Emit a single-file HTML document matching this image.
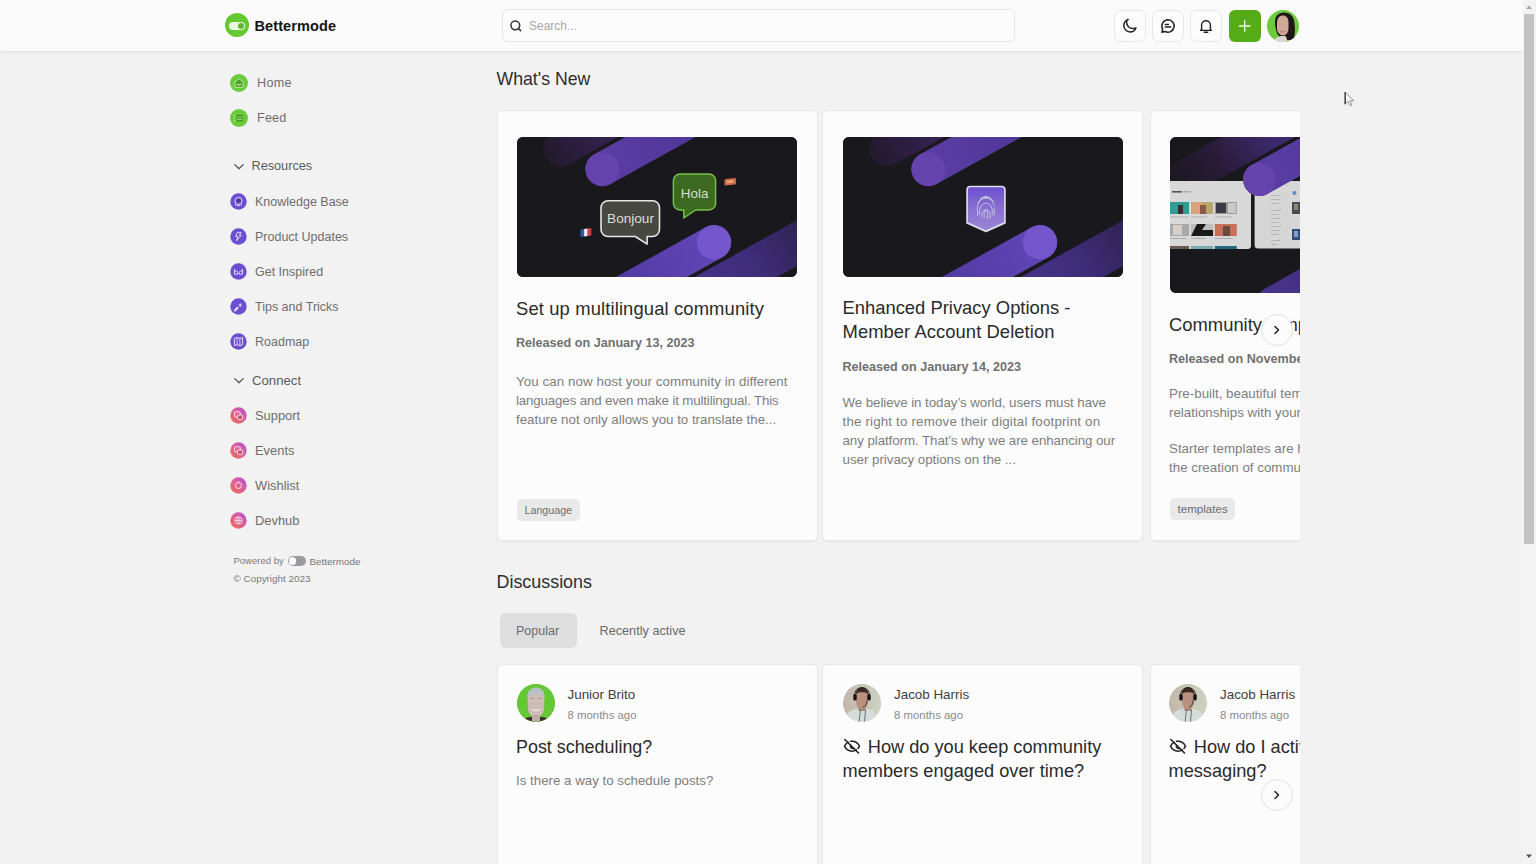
<!DOCTYPE html>
<html><head><meta charset="utf-8">
<style>
*{box-sizing:border-box;margin:0;padding:0}
html,body{width:1536px;height:864px;overflow:hidden}
body{background:#f2f2f2;font-family:"Liberation Sans",sans-serif;position:relative;color:#222}
.abs{position:absolute}
#hdr{position:absolute;left:0;top:0;width:1523px;height:51px;background:#fafafa;box-shadow:0 1px 3px rgba(0,0,0,.08)}
.t{position:absolute;white-space:nowrap;line-height:1}
.btn{position:absolute;top:10px;width:32px;height:32px;border:1px solid #e6e6e6;border-radius:7px;background:#fcfcfc}
.side .ic{position:absolute;width:16px;height:16px;border-radius:50%;left:230px}
.side .lbx{position:absolute;left:256px;font-size:12.5px;color:#6b6b6b;white-space:nowrap;line-height:1}
.card{position:absolute;background:#fcfcfc;border-radius:5px;border:1px solid #e9e9e9;box-shadow:0 1px 2px rgba(0,0,0,.05)}
.img{position:absolute;border-radius:6px;overflow:hidden;background:#19181d}
.ttl{position:absolute;font-size:18.4px;color:#2a2a2a;white-space:nowrap;line-height:24px}
.rel{position:absolute;font-size:12.6px;font-weight:bold;color:#707070;white-space:nowrap;line-height:1}
.body{position:absolute;font-size:13.35px;color:#7e7e7e;white-space:nowrap;line-height:19px}
.tag{position:absolute;height:22px;border-radius:5px;background:#e9e9e9;font-size:11px;color:#6d6d6d;line-height:22px;padding:0 7.5px}
#sb{position:absolute;left:1523px;top:0;width:13px;height:864px;background:#f3f3f3}
</style></head>
<body>
<div id="hdr"></div>
<!-- logo -->
<div class="abs" style="left:225px;top:13px;width:24px;height:24px;border-radius:50%;background:#66c831"></div>
<div class="abs" style="left:229px;top:21.5px;width:16px;height:8px;border-radius:4px;background:#e9f6e1"></div>
<div class="abs" style="left:237.5px;top:22.5px;width:6.5px;height:6.5px;border-radius:50%;background:#5cb82c"></div>
<div class="t" style="left:254.5px;top:18.5px;font-size:14.5px;font-weight:bold;color:#141414;letter-spacing:0.1px">Bettermode</div>
<!-- search -->
<div class="abs" style="left:502px;top:9px;width:513px;height:33px;border:1px solid #e4e4e4;border-radius:6px;background:#fcfcfc"></div>
<svg class="abs" style="left:509px;top:19px" width="14" height="14" viewBox="0 0 14 14"><circle cx="6.3" cy="6.3" r="4.4" fill="none" stroke="#333" stroke-width="1.5"/><path d="M9.4 9.4L11.6 11.6" stroke="#333" stroke-width="1.5" stroke-linecap="round"/></svg>
<div class="t" style="left:529px;top:20px;font-size:12px;color:#a9a9a9">Search...</div>
<!-- buttons -->
<div class="btn" style="left:1114px"></div>
<div class="btn" style="left:1152px"></div>
<div class="btn" style="left:1190px"></div>
<div class="abs" style="left:1229px;top:10px;width:32px;height:32px;border-radius:6px;background:#56ac16"></div>
<svg class="abs" style="left:1237px;top:17.5px" width="16" height="16" viewBox="0 0 16 16"><path d="M7.7 2.7V13.3M2.4 8H13" stroke="#eef8e8" stroke-width="1.35" stroke-linecap="round"/></svg>
<svg class="abs" style="left:1121px;top:17px" width="18" height="18" viewBox="0 0 18 18"><path d="M7.2 2.6C4.6 3.4 2.8 5.8 2.8 8.6c0 3.5 2.8 6.3 6.3 6.3 2.6 0 4.9-1.6 5.8-4-1 .4-2 .6-3 .6-3.5 0-6.3-2.8-6.3-6.3 0-.9.2-1.8.6-2.6z" fill="none" stroke="#222" stroke-width="1.5" stroke-linejoin="round"/></svg>
<svg class="abs" style="left:1159px;top:17px" width="18" height="18" viewBox="0 0 18 18"><path d="M9 2.8a6.2 6.2 0 1 1-2.9 11.7L2.9 15.2l.8-3.1A6.2 6.2 0 0 1 9 2.8z" fill="none" stroke="#222" stroke-width="1.5" stroke-linejoin="round"/><path d="M6.3 7.6h3M6.3 10h5.4" stroke="#222" stroke-width="1.5" stroke-linecap="round"/></svg>
<svg class="abs" style="left:1197px;top:17px" width="18" height="18" viewBox="0 0 18 18"><path d="M4.6 12.2V8.1a4.4 4.4 0 0 1 8.8 0v4.1l1 1.2H3.6z" fill="none" stroke="#222" stroke-width="1.4" stroke-linejoin="round"/><path d="M7.3 15.3h3.4" stroke="#222" stroke-width="1.5" stroke-linecap="round"/></svg>
<!-- avatar -->
<svg class="abs" style="left:1267px;top:10px" width="32" height="32" viewBox="0 0 32 32"><defs><clipPath id="cw"><circle cx="16" cy="16" r="16"/></clipPath></defs><g clip-path="url(#cw)">
<rect width="32" height="32" fill="#6ccb3a"/>
<path d="M8 12c0-6 3.5-9.5 9-9.5 6 0 10 4 10.5 10.5.5 6 1 11-1 17H15c-3-3-7-8-7-18z" fill="#1e1715"/>
<path d="M10 13c0-5 2.5-7.5 6-7.5 3 0 5.5 2.5 5.5 7v6c0 4-2.5 7-5.5 7s-6-3-6-7z" fill="#cfa898"/>
<path d="M7 32c.5-3 3-5.5 7-6h4c1 .5 2 1.5 2 6z" fill="#d9d5d2"/>
<path d="M13 21.5q2.5 1.2 5 0" stroke="#c07070" stroke-width="1" fill="none"/>
</g></svg>
</div>

<div id="sb"></div>
<div class="abs" style="left:1524px;top:14px;width:10px;height:530px;background:#c3c3c3"></div>
<svg class="abs" style="left:1525px;top:4px" width="8" height="6" viewBox="0 0 8 6"><path d="M1 5L4 1.5 7 5z" fill="#a3a3a3"/></svg>
<svg class="abs" style="left:1525px;top:853px" width="8" height="6" viewBox="0 0 8 6"><path d="M1 1.5L4 5 7 1.5z" fill="#505050"/></svg>
<svg class="abs" style="left:1344px;top:91px" width="12" height="17" viewBox="0 0 12 17"><path d="M1 1v12l3-2.6 2 4.4 1.8-.8-1.9-4.2h4z" fill="#f8f8f8" stroke="#8a8a8a" stroke-width=".9" stroke-linejoin="round"/><path d="M1.2 1v12.2" stroke="#3a3a3a" stroke-width="1.3"/></svg>

<div class="side">
<svg class="abs" style="left:230px;top:74px" width="18" height="18" viewBox="0 0 18 18"><circle cx="9" cy="9" r="9" fill="#6acb3d"/><path d="M5 8l4-3.3L13 8v5.3H5z" fill="#4c9f24" stroke="#c9ebb5" stroke-width=".9" stroke-linejoin="round"/><path d="M6.8 10.2q2.2 1.6 4.4 0" fill="none" stroke="#dff4d2" stroke-width="1"/></svg>
<div class="t" style="left:257px;top:76.5px;font-size:12.6px;letter-spacing:.3px;color:#6d6d6d">Home</div>
<svg class="abs" style="left:230px;top:109px" width="18" height="18" viewBox="0 0 18 18"><circle cx="9" cy="9" r="9" fill="#6acb3d"/><rect x="6.3" y="5.8" width="7" height="6.8" rx="1" fill="#48a020"/><path d="M7 8.3h5.6M7 10.5h5.6" stroke="#a8df88" stroke-width=".8"/><circle cx="4.4" cy="6.5" r=".6" fill="#dff4d2"/><circle cx="4.4" cy="9" r=".6" fill="#dff4d2"/><circle cx="4.4" cy="11.5" r=".6" fill="#dff4d2"/></svg>
<div class="t" style="left:257px;top:111.5px;font-size:12.6px;letter-spacing:.2px;color:#6d6d6d">Feed</div>
<svg class="abs" style="left:232.5px;top:162px" width="12" height="10" viewBox="0 0 12 10"><path d="M1.8 2.6L6 6.8l4.2-4.2" fill="none" stroke="#555" stroke-width="1.3" stroke-linecap="round" stroke-linejoin="round"/></svg>
<div class="t" style="left:251.5px;top:160px;font-size:12.7px;color:#5b5b5b">Resources</div>
<svg class="abs" style="left:230px;top:192.5px" width="17" height="17" viewBox="0 0 17 17"><circle cx="8.5" cy="8.5" r="8.2" fill="#6a4fd0"/><circle cx="8.5" cy="8" r="3.6" fill="none" stroke="#e9d6f2" stroke-width="1"/><ellipse cx="8.5" cy="7.6" rx="2.2" ry="1.6" fill="#4a2fa0"/><path d="M6.2 11.2l-.8 1.6M10.8 11.2l.8 1.6M7 12.6h3" stroke="#e9d6f2" stroke-width=".9" fill="none"/></svg>
<div class="t" style="left:255px;top:195.5px;font-size:12.5px;color:#6d6d6d">Knowledge Base</div>
<svg class="abs" style="left:230px;top:227.5px" width="17" height="17" viewBox="0 0 17 17"><circle cx="8.5" cy="8.5" r="8.2" fill="#6a4fd0"/><path d="M9.6 4.4H7.2L5.8 8.6h2.1l-1.4 4.2 4.8-5.6H9.2l1.8-2.8z" fill="none" stroke="#e9d6f2" stroke-width="1" stroke-linejoin="round"/></svg>
<div class="t" style="left:255px;top:230.5px;font-size:12.5px;color:#6d6d6d">Product Updates</div>
<svg class="abs" style="left:230px;top:262.5px" width="17" height="17" viewBox="0 0 17 17"><circle cx="8.5" cy="8.5" r="8.2" fill="#6a4fd0"/><path d="M4.5 6v5.2h3.3V9.6c0-1-.8-1.6-1.6-1.6H4.5M12.5 6v5.2H9.2V9.6c0-1 .8-1.6 1.6-1.6h1.7" fill="none" stroke="#e9d6f2" stroke-width="1" stroke-linejoin="round"/></svg>
<div class="t" style="left:255px;top:265.5px;font-size:12.5px;color:#6d6d6d">Get Inspired</div>
<svg class="abs" style="left:230px;top:297.5px" width="17" height="17" viewBox="0 0 17 17"><circle cx="8.5" cy="8.5" r="8.2" fill="#6a4fd0"/><path d="M5 12.4l2.6-2.6" stroke="#e9d6f2" stroke-width="2.2" stroke-linecap="round"/><path d="M10.2 4.8l.7 1.6 1.6.7-1.6.7-.7 1.6-.7-1.6-1.6-.7 1.6-.7z" fill="#e9d6f2"/></svg>
<div class="t" style="left:255px;top:300.5px;font-size:12.5px;color:#6d6d6d">Tips and Tricks</div>
<svg class="abs" style="left:230px;top:332.5px" width="17" height="17" viewBox="0 0 17 17"><circle cx="8.5" cy="8.5" r="8.2" fill="#6a4fd0"/><path d="M4.4 5.4l2.7-.9 2.8.9 2.7-.9v7.2l-2.7.9-2.8-.9-2.7.9z" fill="none" stroke="#e9d6f2" stroke-width="1" stroke-linejoin="round"/><path d="M7.1 4.5v7.2M9.9 5.4v7.2" stroke="#e9d6f2" stroke-width=".9"/></svg>
<div class="t" style="left:255px;top:335.5px;font-size:12.5px;color:#6d6d6d">Roadmap</div>
<svg class="abs" style="left:232.5px;top:376px" width="12" height="10" viewBox="0 0 12 10"><path d="M1.8 2.6L6 6.8l4.2-4.2" fill="none" stroke="#555" stroke-width="1.3" stroke-linecap="round" stroke-linejoin="round"/></svg>
<div class="t" style="left:252px;top:373.5px;font-size:13.2px;color:#5b5b5b">Connect</div>
<svg class="abs" style="left:230px;top:406.5px" width="17" height="17" viewBox="0 0 17 17"><defs><linearGradient id="pg0" x1="1" y1="0" x2="0" y2="1"><stop offset="0" stop-color="#a94fd6"/><stop offset=".45" stop-color="#df5f9e"/><stop offset="1" stop-color="#e8704a"/></linearGradient></defs><circle cx="8.5" cy="8.5" r="8.2" fill="url(#pg0)"/><rect x="4.6" y="4.8" width="5.6" height="5" rx=".8" fill="none" stroke="#f6e0ea" stroke-width="1"/><rect x="7.6" y="8" width="5" height="4.4" rx=".8" fill="#c8506a" stroke="#f6e0ea" stroke-width="1"/></svg>
<div class="t" style="left:255px;top:409.5px;font-size:12.9px;color:#6d6d6d">Support</div>
<svg class="abs" style="left:230px;top:441.5px" width="17" height="17" viewBox="0 0 17 17"><defs><linearGradient id="pg1" x1="1" y1="0" x2="0" y2="1"><stop offset="0" stop-color="#a94fd6"/><stop offset=".45" stop-color="#df5f9e"/><stop offset="1" stop-color="#e8704a"/></linearGradient></defs><circle cx="8.5" cy="8.5" r="8.2" fill="url(#pg1)"/><rect x="4.6" y="4.8" width="5.6" height="5" rx=".8" fill="none" stroke="#f6e0ea" stroke-width="1"/><rect x="7.6" y="8" width="5" height="4.4" rx=".8" fill="#c8506a" stroke="#f6e0ea" stroke-width="1"/></svg>
<div class="t" style="left:255px;top:444.5px;font-size:12.9px;color:#6d6d6d">Events</div>
<svg class="abs" style="left:230px;top:476.5px" width="17" height="17" viewBox="0 0 17 17"><defs><linearGradient id="pg2" x1="1" y1="0" x2="0" y2="1"><stop offset="0" stop-color="#a94fd6"/><stop offset=".45" stop-color="#df5f9e"/><stop offset="1" stop-color="#e8704a"/></linearGradient></defs><circle cx="8.5" cy="8.5" r="8.2" fill="url(#pg2)"/><circle cx="8.5" cy="8.5" r="3" fill="none" stroke="#f6e0ea" stroke-width="1"/><path d="M8.5 4.3v1.4" stroke="#f6e0ea" stroke-width="1"/></svg>
<div class="t" style="left:255px;top:479.5px;font-size:12.9px;color:#6d6d6d">Wishlist</div>
<svg class="abs" style="left:230px;top:511.5px" width="17" height="17" viewBox="0 0 17 17"><defs><linearGradient id="pg3" x1="1" y1="0" x2="0" y2="1"><stop offset="0" stop-color="#a94fd6"/><stop offset=".45" stop-color="#df5f9e"/><stop offset="1" stop-color="#e8704a"/></linearGradient></defs><circle cx="8.5" cy="8.5" r="8.2" fill="url(#pg3)"/><circle cx="8.5" cy="8.5" r="3.6" fill="none" stroke="#f6e0ea" stroke-width=".9"/><path d="M4.9 8.5h7.2M8.5 4.9c-1.2 1.2-1.2 6 0 7.2M8.5 4.9c1.2 1.2 1.2 6 0 7.2" fill="none" stroke="#f6e0ea" stroke-width=".8"/></svg>
<div class="t" style="left:255px;top:514.5px;font-size:12.9px;color:#6d6d6d">Devhub</div>
<div class="t" style="left:233.5px;top:556px;font-size:9.5px;color:#7a7a7a">Powered by</div>
<div class="abs" style="left:287.5px;top:556px;width:18px;height:9.5px;border-radius:5px;background:#9a9ca2"></div><div class="abs" style="left:288.5px;top:557px;width:7.5px;height:7.5px;border-radius:50%;background:#fff"></div>
<div class="t" style="left:309.5px;top:556.5px;font-size:9.9px;color:#777">Bettermode</div>
<div class="t" style="left:233.5px;top:573.5px;font-size:9.9px;color:#7a7a7a">&copy; Copyright 2023</div>
</div>

<div class="t" style="left:496.5px;top:71px;font-size:17.7px;color:#2e2e2e">What's New</div>
<div class="card" style="left:497px;top:110px;width:320.5px;height:431px"></div>
<div class="card" style="left:822px;top:110px;width:320.5px;height:431px"></div>
<div style="position:absolute;left:1150px;top:110px;width:150px;height:434px;overflow:hidden"><div class="card" style="left:0;top:0;width:320px;height:431px"></div></div>
<div class="img" style="left:517px;top:137px;width:280px;height:140px" id="im1"><svg width="280" height="140" viewBox="0 0 280 140" style="display:block">
<defs>
<linearGradient id="agA" x1="0" y1="0" x2="1" y2="0"><stop offset="0" stop-color="#5c3ea6"/><stop offset=".3" stop-color="#553a9e"/><stop offset=".65" stop-color="#4a3392"/><stop offset="1" stop-color="#3b2a7a"/></linearGradient>
<linearGradient id="agB" x1="0" y1="0" x2="1" y2="0"><stop offset="0" stop-color="#221a2c"/><stop offset=".1" stop-color="#2a1c3c"/><stop offset=".25" stop-color="#34224f"/><stop offset=".4" stop-color="#3a2a6c"/><stop offset=".7" stop-color="#432f80"/><stop offset="1" stop-color="#3a2a70"/></linearGradient>
<linearGradient id="agC" x1="1" y1="0" x2="0" y2="0"><stop offset="0" stop-color="#6448bb"/><stop offset=".25" stop-color="#5a40ad"/><stop offset=".6" stop-color="#4e379e"/><stop offset="1" stop-color="#3d2b82"/></linearGradient>
<linearGradient id="agD" x1="0" y1="0" x2="1" y2="0"><stop offset="0" stop-color="#4a3592"/><stop offset=".45" stop-color="#3d2c76"/><stop offset=".8" stop-color="#2d1f4a"/><stop offset="1" stop-color="#1c1a22" stop-opacity="0"/></linearGradient>
</defs>
<rect width="300" height="160" fill="#19181d"/>
<g transform="translate(85.4,32.2) rotate(-29)">
 <rect x="-44" y="-55.5" width="260" height="35" rx="17.5" fill="url(#agB)"/>
 <rect x="-17" y="-17" width="240" height="34" rx="17" fill="url(#agA)"/>
<circle cx="0" cy="0" r="17" fill="#6543ad"/>
</g>
<g transform="translate(197,105.3) rotate(-29)">
 <rect x="-230" y="-17.2" width="247" height="34.4" rx="17.2" fill="url(#agC)"/>
 <circle cx="0" cy="0" r="17.2" fill="#7356cc"/>
 <rect x="-60" y="21" width="200" height="40" rx="20" fill="url(#agD)"/>
</g>

<path d="M91 63.7h44.5a7 7 0 0 1 7 7v21.8a7 7 0 0 1-7 7h-5.4v7.6l-11.8-7.6H91a7 7 0 0 1-7-7V70.7a7 7 0 0 1 7-7z" fill="#484843" stroke="#e6e6e6" stroke-width="1.6" stroke-linejoin="round"/>
<text x="113.5" y="86.2" font-family="Liberation Sans" font-size="13.6" fill="#dcdcdc" text-anchor="middle">Bonjour</text>
<path d="M163 37.1h29a6.6 6.6 0 0 1 6.6 6.6v22.7a6.6 6.6 0 0 1-6.6 6.6h-13.4l-11.8 8v-8H163a6.6 6.6 0 0 1-6.6-6.6V43.7a6.6 6.6 0 0 1 6.6-6.6z" fill="#3b6a20" stroke="#78c044" stroke-width="1.5" stroke-linejoin="round"/>
<text x="177.6" y="60.7" font-family="Liberation Sans" font-size="13.4" fill="#d6dccf" text-anchor="middle">Hola</text>
<g transform="translate(63.5,91.5) skewY(-8)"><rect x="0" y="1" width="3.6" height="7.5" fill="#2a5aa8"/><rect x="3.6" y="1" width="3.6" height="7.5" fill="#eee"/><rect x="7.2" y="1" width="3.6" height="7.5" fill="#d0404a"/></g>
<g transform="translate(207.5,41.5) skewY(-6)"><rect x="0" y="0.5" width="11.5" height="6.5" rx="1" fill="#c8664a"/><rect x="2" y="2.3" width="7" height="3" fill="#e8a070"/></g>
</svg></div>
<div class="img" style="left:843px;top:137px;width:280px;height:140px" id="im2"><svg width="280" height="140" viewBox="0 0 280 140" style="display:block">
<defs>
<linearGradient id="bgA" x1="0" y1="0" x2="1" y2="0"><stop offset="0" stop-color="#5c3ea6"/><stop offset=".3" stop-color="#553a9e"/><stop offset=".65" stop-color="#4a3392"/><stop offset="1" stop-color="#3b2a7a"/></linearGradient>
<linearGradient id="bgB" x1="0" y1="0" x2="1" y2="0"><stop offset="0" stop-color="#221a2c"/><stop offset=".1" stop-color="#2a1c3c"/><stop offset=".25" stop-color="#34224f"/><stop offset=".4" stop-color="#3a2a6c"/><stop offset=".7" stop-color="#432f80"/><stop offset="1" stop-color="#3a2a70"/></linearGradient>
<linearGradient id="bgC" x1="1" y1="0" x2="0" y2="0"><stop offset="0" stop-color="#6448bb"/><stop offset=".25" stop-color="#5a40ad"/><stop offset=".6" stop-color="#4e379e"/><stop offset="1" stop-color="#3d2b82"/></linearGradient>
<linearGradient id="bgD" x1="0" y1="0" x2="1" y2="0"><stop offset="0" stop-color="#4a3592"/><stop offset=".45" stop-color="#3d2c76"/><stop offset=".8" stop-color="#2d1f4a"/><stop offset="1" stop-color="#1c1a22" stop-opacity="0"/></linearGradient>
</defs>
<rect width="300" height="160" fill="#19181d"/>
<g transform="translate(85.4,32.2) rotate(-29)">
 <rect x="-44" y="-55.5" width="260" height="35" rx="17.5" fill="url(#bgB)"/>
 <rect x="-17" y="-17" width="240" height="34" rx="17" fill="url(#bgA)"/>
<circle cx="0" cy="0" r="17" fill="#6543ad"/>
</g>
<g transform="translate(197,105.3) rotate(-29)">
 <rect x="-230" y="-17.2" width="247" height="34.4" rx="17.2" fill="url(#bgC)"/>
 <circle cx="0" cy="0" r="17.2" fill="#7356cc"/>
 <rect x="-60" y="21" width="200" height="40" rx="20" fill="url(#bgD)"/>
</g>

<defs><linearGradient id="shg" x1="0" y1="0" x2="0" y2="1"><stop offset="0" stop-color="#6a4ed0"/><stop offset=".5" stop-color="#8a70d0"/><stop offset="1" stop-color="#9d86d6"/></linearGradient></defs>
<path d="M127.3 49.5h31.4a3.2 3.2 0 0 1 3.2 3.2v33.2l-18.9 8.5-18.9-8.5V52.7a3.2 3.2 0 0 1 3.2-3.2z" fill="url(#shg)" stroke="#dcdcea" stroke-width="1.7" stroke-linejoin="round"/>
<g fill="none" stroke="#cfd6e8" stroke-width=".8" stroke-linecap="round">
<path d="M134.6 75a8.4 10.6 0 0 1 16.6-6.5"/><path d="M136.8 77.5a6.3 8.3 0 0 1 12.4-5.5v6"/><path d="M139 79.5a4.1 6 0 0 1 8-2.5v4.5"/><path d="M141.2 80.5v-4.5a1.6 2.5 0 0 1 3.2 0v5.5"/><path d="M135 66a9 10 0 0 1 15.5-1.5"/><path d="M137.5 61.5a8 8 0 0 1 10.5 0"/><path d="M142.8 59v2.5"/><path d="M151.2 71v7M134.6 75.5v3"/>
</g>
</svg></div>
<div style="position:absolute;left:1170px;top:137px;width:130px;height:156px;overflow:hidden"><div class="img" style="left:0;top:0;width:300px;height:156px" id="im3"><svg width="300" height="156" viewBox="0 0 300 156" style="display:block">
<defs>
<linearGradient id="cgA" x1="0" y1="0" x2="1" y2="0"><stop offset="0" stop-color="#5c3ea6"/><stop offset=".3" stop-color="#553a9e"/><stop offset=".65" stop-color="#4a3392"/><stop offset="1" stop-color="#3b2a7a"/></linearGradient>
<linearGradient id="cgB" x1="0" y1="0" x2="1" y2="0"><stop offset="0" stop-color="#1c1a22" stop-opacity="0"/><stop offset=".3" stop-color="#2b1b3a"/><stop offset=".5" stop-color="#3a2a6c"/><stop offset="1" stop-color="#46328c"/></linearGradient>
<linearGradient id="cgD" x1="0" y1="0" x2="1" y2="0"><stop offset="0" stop-color="#4a3592"/><stop offset=".6" stop-color="#3d2c76"/><stop offset="1" stop-color="#2d1f4a"/></linearGradient>
</defs>
<rect width="300" height="156" fill="#19181d"/>
<g transform="translate(89.5,42.5) rotate(-29)"><rect x="-110" y="-56" width="280" height="36" rx="18" fill="url(#cgB)"/></g>
<rect x="-10" y="44" width="91" height="68" rx="3.5" fill="#d8d8d8"/>
<rect x="84.6" y="44" width="120" height="67.5" rx="3.5" fill="#d6d6d6"/>
<rect x="2" y="54" width="10" height="1.6" fill="#555"/><rect x="13" y="54.3" width="8" height="1" fill="#999"/>
<rect x="0" y="65" width="19" height="12" fill="#2f9c92"/><rect x="8" y="68" width="5" height="9" fill="#3a3030"/>
<rect x="21" y="65" width="11" height="12" fill="#d9a27f"/><rect x="32" y="65" width="11" height="12" fill="#b9a56a"/><rect x="30" y="68" width="6" height="9" fill="#8a5a48"/>
<rect x="44.8" y="65" width="22" height="12" fill="#9a9a9a"/><rect x="46" y="66" width="10" height="10" fill="#3a3a45"/><rect x="58" y="66" width="8" height="10" fill="#c8c8c8"/>
<g fill="#a8a8a8"><rect x="0" y="79.5" width="18" height=".9"/><rect x="21" y="79.5" width="16" height=".9"/><rect x="44.8" y="79.5" width="17" height=".9"/></g>
<rect x="0" y="87" width="19" height="12" fill="#a9a9a9"/><rect x="3" y="88" width="9" height="10" fill="#d8d0c8"/>
<rect x="21" y="87" width="22" height="12" fill="#bdbdbd"/><path d="M21 99l6-12h9l-4 6h11v6z" fill="#1a1a1a"/>
<rect x="44.8" y="87" width="22" height="12" fill="#c8705a"/><rect x="53" y="89" width="7" height="10" fill="#6a4a3a"/>
<g fill="#a8a8a8"><rect x="0" y="101" width="17" height=".9"/><rect x="21" y="101" width="15" height=".9"/><rect x="44.8" y="101" width="18" height=".9"/></g>
<rect x="0" y="109" width="19" height="3" fill="#6a5a50"/><rect x="21" y="109" width="22" height="3" fill="#7ab0b0"/><rect x="44.8" y="109" width="22" height="3" fill="#2a6a80"/>
<g fill="#b2b2b2"><rect x="101" y="58" width="9" height=".9"/><rect x="101" y="62" width="10" height=".9"/><rect x="101" y="66" width="8" height=".9"/><rect x="101" y="73" width="10" height=".9"/><rect x="101" y="77" width="8" height=".9"/><rect x="101" y="81" width="9" height=".9"/><rect x="101" y="85" width="8" height=".9"/><rect x="101" y="89" width="10" height=".9"/><rect x="101" y="93" width="9" height=".9"/><rect x="101" y="97" width="8" height=".9"/><rect x="101" y="103" width="9" height=".9"/><rect x="101" y="107" width="6" height=".9"/></g>
<circle cx="124.5" cy="56" r="2" fill="#5a8ad0"/>
<rect x="122" y="65" width="9" height="12" fill="#4a4a50"/><rect x="124" y="67" width="4" height="6" fill="#8a8a70"/>
<rect x="122" y="92" width="9" height="11" fill="#3a4a80"/><rect x="124" y="94" width="4" height="6" fill="#7aa0c0"/>
<g transform="translate(89.5,42.5) rotate(-29)"><rect x="-16.5" y="-16.5" width="240" height="33" rx="16.5" fill="url(#cgA)"/><circle cx="0" cy="0" r="16.5" fill="#6543ad"/></g>
<g transform="translate(140,146) rotate(-29)"><rect x="-60" y="-17" width="200" height="35" rx="17.5" fill="url(#cgD)"/></g>
</svg></div></div>

<div class="ttl" style="left:516px;top:296.5px;letter-spacing:.13px">Set up multilingual community</div>
<div class="rel" style="left:516px;top:337px">Released on January 13, 2023</div>
<div class="body" style="left:516px;top:371.5px"><div style="letter-spacing:.07px">You can now host your community in different</div><div style="letter-spacing:-.16px">languages and even make it multilingual. This</div><div style="letter-spacing:-.02px">feature not only allows you to translate the...</div></div>
<div class="tag" style="left:517px;top:498.5px;width:63px;font-size:10.7px">Language</div>

<div class="ttl" style="left:842.5px;top:296px"><div>Enhanced Privacy Options -</div><div style="letter-spacing:.06px">Member Account Deletion</div></div>
<div class="rel" style="left:842.5px;top:361px">Released on January 14, 2023</div>
<div class="body" style="left:842.5px;top:392.5px"><div style="letter-spacing:-.07px">We believe in today’s world, users must have</div><div style="letter-spacing:.17px">the right to remove their digital footprint on</div><div style="letter-spacing:-.08px">any platform. That’s why we are enhancing our</div><div style="letter-spacing:-.03px">user privacy options on the ...</div></div>

<div style="position:absolute;left:1150px;top:290px;width:150px;height:250px;overflow:hidden">
<div class="ttl" style="left:19px;top:23px">Community templates</div>
<div class="rel" style="left:19px;top:63px">Released on November 10, 2022</div>
<div class="body" style="left:19px;top:94px">Pre-built, beautiful templates<br>relationships with your members</div>
<div class="body" style="left:19px;top:148.5px">Starter templates are here to<br>the creation of communities</div>
<div class="tag" style="left:20px;top:208px;width:65px;font-size:11.6px">templates</div>
</div>
<div class="abs" style="left:1261px;top:314px;width:32px;height:32px;border-radius:50%;background:#fcfcfc;border:1px solid #e0e0e0"></div>
<svg class="abs" style="left:1269px;top:322px" width="16" height="16" viewBox="0 0 16 16"><path d="M6 4.5L9.5 8 6 11.5" fill="none" stroke="#222" stroke-width="1.5" stroke-linecap="round" stroke-linejoin="round"/></svg>

<div class="t" style="left:496.5px;top:573.5px;font-size:17.9px;color:#2e2e2e">Discussions</div>
<div class="abs" style="left:500px;top:613px;width:77px;height:34.5px;border-radius:6px;background:#dedede"></div>
<div class="t" style="left:516px;top:624.5px;font-size:12.5px;color:#6a6a6a">Popular</div>
<div class="t" style="left:599.5px;top:624.5px;font-size:12.7px;color:#6a6a6a">Recently active</div>

<div class="card" style="left:497px;top:663.5px;width:320.5px;height:260px"></div>
<div class="card" style="left:822px;top:663.5px;width:320.5px;height:260px"></div>
<div style="position:absolute;left:1150px;top:663.5px;width:150px;height:260px;overflow:hidden"><div class="card" style="left:0;top:0;width:320px;height:260px"></div></div>

<div class="abs" style="left:517px;top:684px;width:38px;height:38px;border-radius:50%;background:#6acb3d;overflow:hidden" id="av1"><svg width="38" height="38" viewBox="0 0 38 38" style="display:block"><defs><clipPath id="c1"><circle cx="19" cy="19" r="19"/></clipPath></defs><g clip-path="url(#c1)">
<rect width="38" height="38" fill="#64c734"/>
<path d="M4 40c1-4 4-6.5 9-7h12c5 .5 8 3 9 7z" fill="#3a3028"/>
<path d="M10.8 13c0-5.5 3.3-8.5 8.2-8.5s8.2 3 8.2 8.5v10c0 6-3.5 10.5-8.2 10.5S10.8 29 10.8 23z" fill="#cdbdb6"/>
<path d="M15 31h8v8h-8z" fill="#bfaea6"/>
<path d="M10.5 14c-.5-6.5 3-10.5 8.5-10.5s9 4 8.5 10.5c-1.5-2.5-3.5-3.5-8.5-3.5s-7 1-8.5 3.5z" fill="#b8c2c4"/>
<path d="M13.5 14.5h4M20.5 14.5h4" stroke="#a89890" stroke-width="1"/>
<path d="M14.5 25q4.5 3 9 0" stroke="#f2e0e0" stroke-width="1.4" fill="none"/>
</g></svg></div>
<div class="t" style="left:567.5px;top:687.5px;font-size:13.4px;color:#404040">Junior Brito</div>
<div class="t" style="left:567.5px;top:709.5px;font-size:11.4px;color:#8a8a8a">8 months ago</div>
<div class="ttl" style="left:516px;top:735px;font-size:17.9px">Post scheduling?</div>
<div class="body" style="left:516px;top:771px;font-size:13.3px">Is there a way to schedule posts?</div>

<div class="abs" style="left:843px;top:684px;width:38px;height:38px;border-radius:50%;background:#cfd3cc;overflow:hidden" id="av2"><svg width="38" height="38" viewBox="0 0 38 38" style="display:block"><defs><clipPath id="c2"><circle cx="19" cy="19" r="19"/></clipPath><linearGradient id="jb" x1="0" x2="1"><stop offset="0" stop-color="#c4b6aa"/><stop offset="1" stop-color="#cbd3c2"/></linearGradient></defs><g clip-path="url(#c2)">
<rect width="38" height="38" fill="url(#jb)"/>
<path d="M1 40c1-10 6-14 12-15h12c6 1 11 5 12 15z" fill="#d6ddd9"/>
<path d="M15 21h8l-.5 6h-7z" fill="#a88a7a"/>
<path d="M13 11.5c0-5 2.6-7.5 6-7.5s6 2.5 6 7.5v6c0 4.5-2.6 7-6 7s-6-2.5-6-7z" fill="#b8927f"/>
<path d="M12.8 10.5c0-4.5 2.8-7 6.2-7s6.2 2.5 6.2 7c-1.2-1.8-2.8-2.3-6.2-2.3s-5 .5-6.2 2.3z" fill="#3a2a22"/>
<path d="M11.5 11a7.5 7.5 0 0 1 15 0" fill="none" stroke="#222" stroke-width="1"/>
<rect x="10.3" y="10" width="3.4" height="6.5" rx="1.5" fill="#141414"/><rect x="24.3" y="10" width="3.4" height="6.5" rx="1.5" fill="#141414"/>
<path d="M24 16.5c0 4-1.5 6-4 6.5" fill="none" stroke="#222" stroke-width=".8"/>
<path d="M17.5 25.5l-1.5 13M22.5 26l-1 12" stroke="#5a6670" stroke-width=".9"/>
</g></svg></div>
<div class="t" style="left:894px;top:687.5px;font-size:13.4px;color:#404040">Jacob Harris</div>
<div class="t" style="left:894px;top:709.5px;font-size:11.4px;color:#8a8a8a">8 months ago</div>
<div class="ttl" style="left:842.5px;top:735px;font-size:18.2px">&nbsp;&nbsp;&nbsp;&nbsp;&nbsp;How do you keep community<br>members engaged over time?</div>

<div style="position:absolute;left:1150px;top:664px;width:150px;height:200px;overflow:hidden">
<div class="abs" style="left:19px;top:20px;width:38px;height:38px;border-radius:50%;background:#cfd3cc;overflow:hidden" id="av3"><svg width="38" height="38" viewBox="0 0 38 38" style="display:block"><defs><clipPath id="c3"><circle cx="19" cy="19" r="19"/></clipPath><linearGradient id="jb3" x1="0" x2="1"><stop offset="0" stop-color="#c4b6aa"/><stop offset="1" stop-color="#cbd3c2"/></linearGradient></defs><g clip-path="url(#c3)">
<rect width="38" height="38" fill="url(#jb3)"/>
<path d="M1 40c1-10 6-14 12-15h12c6 1 11 5 12 15z" fill="#d6ddd9"/>
<path d="M15 21h8l-.5 6h-7z" fill="#a88a7a"/>
<path d="M13 11.5c0-5 2.6-7.5 6-7.5s6 2.5 6 7.5v6c0 4.5-2.6 7-6 7s-6-2.5-6-7z" fill="#b8927f"/>
<path d="M12.8 10.5c0-4.5 2.8-7 6.2-7s6.2 2.5 6.2 7c-1.2-1.8-2.8-2.3-6.2-2.3s-5 .5-6.2 2.3z" fill="#3a2a22"/>
<path d="M11.5 11a7.5 7.5 0 0 1 15 0" fill="none" stroke="#222" stroke-width="1"/>
<rect x="10.3" y="10" width="3.4" height="6.5" rx="1.5" fill="#141414"/><rect x="24.3" y="10" width="3.4" height="6.5" rx="1.5" fill="#141414"/>
<path d="M24 16.5c0 4-1.5 6-4 6.5" fill="none" stroke="#222" stroke-width=".8"/>
<path d="M17.5 25.5l-1.5 13M22.5 26l-1 12" stroke="#5a6670" stroke-width=".9"/>
</g></svg></div>
<div class="t" style="left:70px;top:23.5px;font-size:13.4px;color:#404040">Jacob Harris</div>
<div class="t" style="left:70px;top:45.5px;font-size:11.4px;color:#8a8a8a">8 months ago</div>
<svg class="abs" style="left:19px;top:74px" width="18" height="17" viewBox="0 0 18 17"><path d="M5.3 4.2C3.5 5.2 2.2 6.8 1.5 8.2c1.4 2.9 4.3 5 7.5 5 1.6 0 3.1-.5 4.3-1.3M7.6 3.3c.5-.1.9-.1 1.4-.1 3.2 0 6.1 2.1 7.5 5-.4.8-.9 1.5-1.5 2.2" fill="none" stroke="#222" stroke-width="1.5" stroke-linecap="round"/><path d="M7.6 7.2A2.3 2.3 0 0 0 10.6 10.3" fill="none" stroke="#222" stroke-width="1.5" stroke-linecap="round"/><path d="M1.8 1.5L15.5 15" stroke="#222" stroke-width="1.6" stroke-linecap="round"/></svg>
<div class="ttl" style="left:18.5px;top:71px;font-size:18.2px">&nbsp;&nbsp;&nbsp;&nbsp;&nbsp;How do I activate<br>messaging?</div>
</div>
<svg class="abs" style="left:843px;top:738px" width="18" height="17" viewBox="0 0 18 17"><path d="M5.3 4.2C3.5 5.2 2.2 6.8 1.5 8.2c1.4 2.9 4.3 5 7.5 5 1.6 0 3.1-.5 4.3-1.3M7.6 3.3c.5-.1.9-.1 1.4-.1 3.2 0 6.1 2.1 7.5 5-.4.8-.9 1.5-1.5 2.2" fill="none" stroke="#222" stroke-width="1.5" stroke-linecap="round"/><path d="M7.6 7.2A2.3 2.3 0 0 0 10.6 10.3" fill="none" stroke="#222" stroke-width="1.5" stroke-linecap="round"/><path d="M1.8 1.5L15.5 15" stroke="#222" stroke-width="1.6" stroke-linecap="round"/></svg>
<div class="abs" style="left:1261px;top:779px;width:32px;height:32px;border-radius:50%;background:#fcfcfc;border:1px solid #e0e0e0"></div>
<svg class="abs" style="left:1269px;top:787px" width="16" height="16" viewBox="0 0 16 16"><path d="M6 4.5L9.5 8 6 11.5" fill="none" stroke="#222" stroke-width="1.5" stroke-linecap="round" stroke-linejoin="round"/></svg>

</body></html>
